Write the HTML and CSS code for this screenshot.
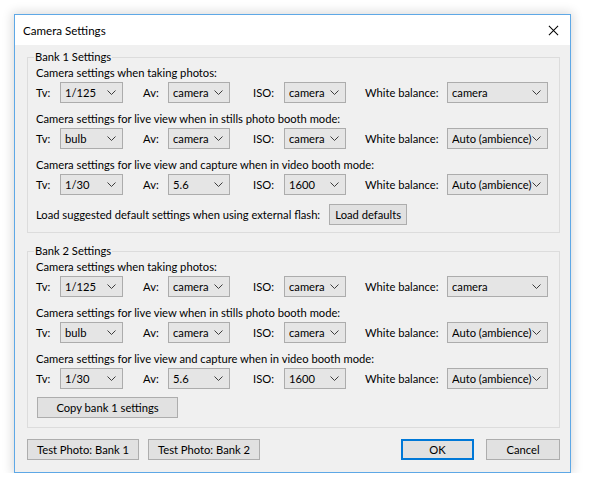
FILE: index.html
```html
<!DOCTYPE html>
<html lang="en">
  <head>
    <meta charset="UTF-8" />
    <title>Camera Settings</title>
    <link rel="stylesheet" href="styles.css">
  </head>
  <body>
    <div class="window">
      <div class="title-bar">
        <span class="title">Camera Settings</span>
        <svg class="close" width="12" height="12" viewBox="0 0 12 12">
          <path d="M1 1 L11 11 M11 1 L1 11" stroke="#000" stroke-width="1.1" fill="none" />
        </svg>
      </div>

      <div class="dialog-body">
        <fieldset class="group">
          <legend>Bank 1 Settings</legend>

          <div class="caption">Camera settings when taking photos:</div>
          <div class="combo-row">
            <span class="lbl">Tv:</span>
            <div class="combo"><span>1/125</span><svg viewBox="0 0 9 5"><path d="M0.5 0.5 L4.5 4.5 L8.5 0.5" /></svg></div>
            <span></span>
            <span class="lbl">Av:</span>
            <div class="combo"><span>camera</span><svg viewBox="0 0 9 5"><path d="M0.5 0.5 L4.5 4.5 L8.5 0.5" /></svg></div>
            <span></span>
            <span class="lbl">ISO:</span>
            <div class="combo"><span>camera</span><svg viewBox="0 0 9 5"><path d="M0.5 0.5 L4.5 4.5 L8.5 0.5" /></svg></div>
            <span></span>
            <span class="lbl">White balance:</span>
            <div class="combo"><span>camera</span><svg viewBox="0 0 9 5"><path d="M0.5 0.5 L4.5 4.5 L8.5 0.5" /></svg></div>
          </div>

          <div class="caption">Camera settings for live view when in stills photo booth mode:</div>
          <div class="combo-row">
            <span class="lbl">Tv:</span>
            <div class="combo"><span>bulb</span><svg viewBox="0 0 9 5"><path d="M0.5 0.5 L4.5 4.5 L8.5 0.5" /></svg></div>
            <span></span>
            <span class="lbl">Av:</span>
            <div class="combo"><span>camera</span><svg viewBox="0 0 9 5"><path d="M0.5 0.5 L4.5 4.5 L8.5 0.5" /></svg></div>
            <span></span>
            <span class="lbl">ISO:</span>
            <div class="combo"><span>camera</span><svg viewBox="0 0 9 5"><path d="M0.5 0.5 L4.5 4.5 L8.5 0.5" /></svg></div>
            <span></span>
            <span class="lbl">White balance:</span>
            <div class="combo"><span>Auto (ambience)</span><svg viewBox="0 0 9 5"><path d="M0.5 0.5 L4.5 4.5 L8.5 0.5" /></svg></div>
          </div>

          <div class="caption">Camera settings for live view and capture when in video booth mode:</div>
          <div class="combo-row">
            <span class="lbl">Tv:</span>
            <div class="combo"><span>1/30</span><svg viewBox="0 0 9 5"><path d="M0.5 0.5 L4.5 4.5 L8.5 0.5" /></svg></div>
            <span></span>
            <span class="lbl">Av:</span>
            <div class="combo"><span>5.6</span><svg viewBox="0 0 9 5"><path d="M0.5 0.5 L4.5 4.5 L8.5 0.5" /></svg></div>
            <span></span>
            <span class="lbl">ISO:</span>
            <div class="combo"><span>1600</span><svg viewBox="0 0 9 5"><path d="M0.5 0.5 L4.5 4.5 L8.5 0.5" /></svg></div>
            <span></span>
            <span class="lbl">White balance:</span>
            <div class="combo"><span>Auto (ambience)</span><svg viewBox="0 0 9 5"><path d="M0.5 0.5 L4.5 4.5 L8.5 0.5" /></svg></div>
          </div>

          <div class="flash-row">
            <span>Load suggested default settings when using external flash:</span>
            <button class="btn btn-load">Load defaults</button>
          </div>
        </fieldset>

        <fieldset class="group group-2">
          <legend>Bank 2 Settings</legend>

          <div class="caption">Camera settings when taking photos:</div>
          <div class="combo-row">
            <span class="lbl">Tv:</span>
            <div class="combo"><span>1/125</span><svg viewBox="0 0 9 5"><path d="M0.5 0.5 L4.5 4.5 L8.5 0.5" /></svg></div>
            <span></span>
            <span class="lbl">Av:</span>
            <div class="combo"><span>camera</span><svg viewBox="0 0 9 5"><path d="M0.5 0.5 L4.5 4.5 L8.5 0.5" /></svg></div>
            <span></span>
            <span class="lbl">ISO:</span>
            <div class="combo"><span>camera</span><svg viewBox="0 0 9 5"><path d="M0.5 0.5 L4.5 4.5 L8.5 0.5" /></svg></div>
            <span></span>
            <span class="lbl">White balance:</span>
            <div class="combo"><span>camera</span><svg viewBox="0 0 9 5"><path d="M0.5 0.5 L4.5 4.5 L8.5 0.5" /></svg></div>
          </div>

          <div class="caption">Camera settings for live view when in stills photo booth mode:</div>
          <div class="combo-row">
            <span class="lbl">Tv:</span>
            <div class="combo"><span>bulb</span><svg viewBox="0 0 9 5"><path d="M0.5 0.5 L4.5 4.5 L8.5 0.5" /></svg></div>
            <span></span>
            <span class="lbl">Av:</span>
            <div class="combo"><span>camera</span><svg viewBox="0 0 9 5"><path d="M0.5 0.5 L4.5 4.5 L8.5 0.5" /></svg></div>
            <span></span>
            <span class="lbl">ISO:</span>
            <div class="combo"><span>camera</span><svg viewBox="0 0 9 5"><path d="M0.5 0.5 L4.5 4.5 L8.5 0.5" /></svg></div>
            <span></span>
            <span class="lbl">White balance:</span>
            <div class="combo"><span>Auto (ambience)</span><svg viewBox="0 0 9 5"><path d="M0.5 0.5 L4.5 4.5 L8.5 0.5" /></svg></div>
          </div>

          <div class="caption">Camera settings for live view and capture when in video booth mode:</div>
          <div class="combo-row">
            <span class="lbl">Tv:</span>
            <div class="combo"><span>1/30</span><svg viewBox="0 0 9 5"><path d="M0.5 0.5 L4.5 4.5 L8.5 0.5" /></svg></div>
            <span></span>
            <span class="lbl">Av:</span>
            <div class="combo"><span>5.6</span><svg viewBox="0 0 9 5"><path d="M0.5 0.5 L4.5 4.5 L8.5 0.5" /></svg></div>
            <span></span>
            <span class="lbl">ISO:</span>
            <div class="combo"><span>1600</span><svg viewBox="0 0 9 5"><path d="M0.5 0.5 L4.5 4.5 L8.5 0.5" /></svg></div>
            <span></span>
            <span class="lbl">White balance:</span>
            <div class="combo"><span>Auto (ambience)</span><svg viewBox="0 0 9 5"><path d="M0.5 0.5 L4.5 4.5 L8.5 0.5" /></svg></div>
          </div>

          <button class="btn btn-copy">Copy bank 1 settings</button>
        </fieldset>

        <div class="footer">
          <button class="btn btn-test">Test Photo: Bank 1</button>
          <button class="btn btn-test">Test Photo: Bank 2</button>
          <span class="spacer"></span>
          <button class="btn btn-ok">OK</button>
          <button class="btn btn-cancel">Cancel</button>
        </div>
      </div>
    </div>
  </body>
</html>
```

FILE: styles.css
```css
* {
  box-sizing: border-box;
}

body {
  margin: 0;
  background: #ffffff;
  font-family: Lato, "Noto Sans", sans-serif;
  font-size: 11.2px;
  color: #000000;
}

.window {
  margin: 14px 0 0 14px;
  width: 557px;
  height: 459px;
  border: 1px solid #5ea8e6;
  background: #f0f0f0;
  box-shadow: 0 0 10px 2px rgba(0, 0, 0, 0.14);
  display: flex;
  flex-direction: column;
}

.title-bar {
  height: 30px;
  background: #ffffff;
  display: flex;
  align-items: center;
  padding: 0 10px 0 8px;
}

.title {
  flex: 1;
  font-size: 11.6px;
}

.close {
  width: 11px;
  height: 11px;
  margin-right: 1px;
}

.dialog-body {
  padding: 4px 10px 0 12px;
}

/* group boxes */
.group {
  margin: 0;
  padding: 0 8px 7px 8px;
  border: 1px solid #dcdcdc;
  min-width: 0;
}

.group legend {
  margin-left: -2px;
  padding: 0 1px;
  line-height: 16px;
}

.group-2 {
  margin-top: 10px;
  padding-bottom: 9px;
}

.caption {
  line-height: 16px;
  white-space: nowrap;
}

.combo-row {
  display: grid;
  grid-template-columns: 24px 63px 20px 25px 62px 23px 31px 62px 19px 82px 101px;
  align-items: center;
  margin: 1px 0 8px 0;
  height: 21px;
}

.combo-row .lbl {
  white-space: nowrap;
}

.combo {
  height: 21px;
  background: #e5e5e5;
  border: 1px solid #acacac;
  display: flex;
  align-items: center;
  padding: 0 6px 0 4px;
  white-space: nowrap;
}

.combo span {
  flex: 1;
  overflow: hidden;
}

.combo svg {
  width: 9px;
  height: 5px;
  flex: none;
  fill: none;
  stroke: #3c3c3c;
  stroke-width: 1;
}

.flash-row {
  display: flex;
  align-items: center;
  gap: 9px;
  margin-top: 9px;
  white-space: nowrap;
}

/* push buttons */
.btn {
  font-family: inherit;
  font-size: 11.2px;
  color: #000000;
  background: #e1e1e1;
  border: 1px solid #adadad;
  height: 21px;
  padding: 0;
  text-align: center;
  white-space: nowrap;
}

.btn-load {
  width: 78px;
}

.btn-copy {
  width: 141px;
  margin: 0 0 0 1px;
  display: block;
}

.footer {
  display: flex;
  align-items: center;
  margin-top: 11px;
  gap: 9px;
}

.spacer {
  flex: 1;
}

.btn-test {
  width: 112px;
}

.btn-ok {
  width: 73px;
  border: 2px solid #0078d7;
  margin-right: 3px;
}

.btn-cancel {
  width: 74px;
}
```
